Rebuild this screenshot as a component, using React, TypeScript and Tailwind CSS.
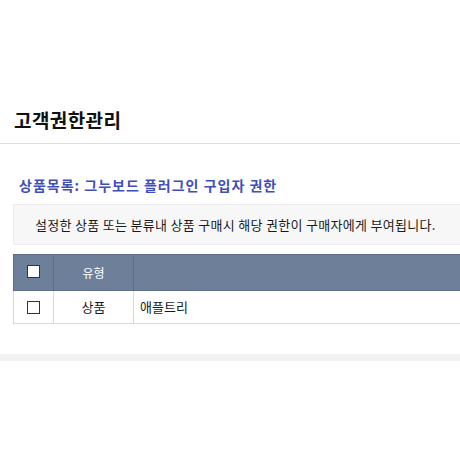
import React from "react";

export default function App() {
  const font = { fontFamily: '"Noto Sans CJK KR", "Noto Sans", sans-serif' };
  return (
    <div className="w-[460px] h-[460px] overflow-hidden bg-white" style={font}>
      <div className="w-[700px] pt-[97px]">
        <div className="h-[47px] flex items-center pl-[14px] border-b border-[#dddddd] text-[19px] font-bold text-[#111] tracking-[0.4px]">
          고객권한관리
        </div>
        <div className="mt-[31px] h-[20px] flex items-center pl-[19px] text-[14px] font-bold text-[#3f4fb8] tracking-[1px]">
          상품목록: 그누보드 플러그인 구입자 권한
        </div>
        <div className="mt-[9px] ml-[13px] h-[41px] flex items-center pl-[21px] bg-[#f7f7f7] border border-[#ececec] text-[13px] text-[#1a1a1a] tracking-[0.3px]">
          설정한 상품 또는 분류내 상품 구매시 해당 권한이 구매자에게 부여됩니다.
        </div>
        <div className="mt-[9px] ml-[13px]">
          <div className="flex h-[37px] bg-[#6e7f99] border border-[#5e6e88]">
            <div className="w-[40px] flex items-center justify-center border-r border-[#5e6e88]">
              <div className="w-[13px] h-[13px] bg-white border border-[#333] mt-[-2px]" />
            </div>
            <div className="w-[80px] flex items-center justify-center border-r border-[#5e6e88] text-[12px] text-white">
              유형
            </div>
            <div className="flex-1" />
          </div>
          <div className="flex h-[33px] border-x border-b border-[#d6d9e2] text-[13px] text-[#1a1a1a]">
            <div className="w-[40px] flex items-center justify-center border-r border-[#d6d9e2]">
              <div className="w-[13px] h-[13px] bg-white border border-[#333]" />
            </div>
            <div className="w-[80px] flex items-center justify-center border-r border-[#d6d9e2]">
              상품
            </div>
            <div className="flex-1 flex items-center pl-[6px]">애플트리</div>
          </div>
        </div>
        <div className="mt-[30px] h-[7px] bg-[#f2f2f2]" />
      </div>
    </div>
  );
}
